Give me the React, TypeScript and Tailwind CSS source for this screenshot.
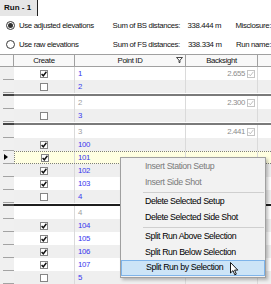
import React from "react";

type RowData = {
  cb: boolean | null;
  id: string;
  blue: boolean;
  bs?: string;
  sel?: boolean;
  sep?: "gray" | "black";
};

const rows: RowData[] = [
  { cb: true, id: "1", blue: true, bs: "2.655" },
  { cb: false, id: "2", blue: true, sep: "gray" },
  { cb: null, id: "2", blue: false, bs: "2.300" },
  { cb: false, id: "3", blue: true, sep: "gray" },
  { cb: null, id: "3", blue: false, bs: "2.441" },
  { cb: true, id: "100", blue: true },
  { cb: true, id: "101", blue: true, sel: true },
  { cb: true, id: "102", blue: true },
  { cb: true, id: "103", blue: true },
  { cb: false, id: "4", blue: true, sep: "black" },
  { cb: null, id: "4", blue: false },
  { cb: true, id: "104", blue: true },
  { cb: true, id: "105", blue: true },
  { cb: true, id: "106", blue: true },
  { cb: true, id: "107", blue: true },
  { cb: false, id: "5", blue: true },
];

const menu = [
  { t: "Insert Station Setup", dis: true },
  { t: "Insert Side Shot", dis: true },
  { sep: true },
  { t: "Delete Selected Setup" },
  { t: "Delete Selected Side Shot" },
  { sep: true },
  { t: "Split Run Above Selection" },
  { t: "Split Run Below Selection" },
  { t: "Split Run by Selection", hot: true },
];

const CheckBox = ({ checked, light }: { checked: boolean; light?: boolean }) => (
  <span
    className={`flex items-center justify-center w-[8px] h-[8px] border ${
      light ? "border-[#c4c4c4] bg-white" : "border-[#858585] bg-white"
    }`}
  >
    {checked && (
      <svg width="6" height="6" viewBox="0 0 6 6">
        <polyline
          points="0.6,3 2.3,4.8 5.4,0.8"
          fill="none"
          stroke={light ? "#b0b0b0" : "#111"}
          strokeWidth={light ? 0.8 : 1.4}
        />
      </svg>
    )}
  </span>
);

const Radio = ({ on }: { on?: boolean }) => (
  <span className="flex items-center justify-center w-[9px] h-[9px] rounded-full border border-[#3a3a3a] bg-white">
    {on && <span className="w-[5px] h-[5px] rounded-full bg-[#333]" />}
  </span>
);

const Separator = ({ kind }: { kind: "gray" | "black" }) => (
  <div className="flex h-[3px]">
    <div className="w-[14px] bg-[#f0f0f0] pl-[3px]">
      <div className="mt-[1px] h-[2px] bg-[#444]" />
    </div>
    <div className={`flex-1 mt-[1px] h-[2px] ${kind === "black" ? "bg-[#1e1e1e]" : "bg-[#7a7a7a]"}`} />
  </div>
);

const GridRow = ({ r, i }: { r: RowData; i: number }) => {
  const bg = r.sel ? "bg-[#ffffe1]" : i % 2 ? "bg-[#efefef]" : "bg-white";
  return (
    <>
      <div className="flex h-[13px]">
        <div className="w-[14px] bg-[#f0f0f0] pl-[3px]">
          <div className="h-full border-b border-[#a3a3a3] flex items-center pl-[1px]">
            {r.sel && (
              <svg width="4" height="6" viewBox="0 0 4 6">
                <polygon points="0,0 4,3 0,6" fill="#000" />
              </svg>
            )}
          </div>
        </div>
        <div
          className={`flex flex-1 ${bg} ${
            r.sel ? "border-y border-l border-dotted border-[#7d7d7d]" : ""
          }`}
        >
          <div className={`${r.sel ? "w-[60px]" : "w-[61px]"} border-r border-[#dadada] flex items-center justify-center`}>
            {r.cb !== null && <CheckBox checked={r.cb} />}
          </div>
          <div
            className={`w-[111px] border-r border-[#dadada] flex items-center pl-[3px] ${
              r.blue ? "text-[#3838ee]" : "text-[#a0a0a0]"
            }`}
          >
            {r.id}
          </div>
          <div className="w-[72px] border-r border-[#dadada] flex items-center justify-end pr-[2px] gap-[2px] text-[#8c8c8c]">
            {r.bs && (
              <>
                <span>{r.bs}</span>
                <CheckBox checked light />
              </>
            )}
          </div>
          <div className="flex-1" />
        </div>
      </div>
      {r.sep && <Separator kind={r.sep} />}
    </>
  );
};

export default function App() {
  return (
    <div className="relative w-[271px] h-[284px] overflow-hidden bg-white text-[7.8px] tracking-[-0.35px] leading-none text-[#111] font-['Liberation_Sans',Arial,sans-serif]">
      {/* tab strip */}
      <div className="flex h-[16px]">
        <div className="w-[38px] bg-[#e6e6e6] border-r border-[#222] flex items-center pl-[4px] font-bold text-[8px] tracking-normal">
          Run - 1
        </div>
      </div>

      {/* options */}
      <div className="flex items-center h-[19px] whitespace-nowrap">
        <div className="w-[117px] flex items-center gap-[4px] pl-[6px]">
          <Radio on />
          <span>Use adjusted elevations</span>
        </div>
        <div className="w-[78px]">Sum of BS distances:</div>
        <div className="w-[50px]">338.444 m</div>
        <div>Misclosure:</div>
      </div>
      <div className="flex items-center h-[19px] whitespace-nowrap">
        <div className="w-[117px] flex items-center gap-[4px] pl-[6px]">
          <Radio />
          <span>Use raw elevations</span>
        </div>
        <div className="w-[78px]">Sum of FS distances:</div>
        <div className="w-[50px]">338.334 m</div>
        <div>Run name:</div>
      </div>

      {/* grid header */}
      <div className="flex h-[13px] border-y border-[#a0a0a0] bg-[#f8f8f8]">
        <div className="w-[14px] border-r border-[#a0a0a0]" />
        <div className="w-[61px] border-r border-[#a0a0a0] flex items-center justify-center">Create</div>
        <div className="relative w-[111px] border-r border-[#a0a0a0] flex items-center justify-center">
          Point ID
          <svg className="absolute right-[2px] top-[2px]" width="7" height="6" viewBox="0 0 7 6">
            <polygon points="0.5,0.5 6.5,0.5 4,3.2 4,5.5 3,5.5 3,3.2" fill="#fff" stroke="#333" strokeWidth="0.9" />
          </svg>
        </div>
        <div className="w-[72px] border-r border-[#a0a0a0] flex items-center justify-center">Backsight</div>
        <div className="flex-1" />
      </div>

      {/* grid rows */}
      <div className="flex flex-col">
        {rows.map((r, i) => (
          <GridRow key={i} r={r} i={i} />
        ))}
      </div>

      {/* context menu */}
      <div className="absolute left-[120px] top-[157px] w-[146px] border border-[#a0a0a0] bg-[#f2f2f2] py-[1px] shadow-[2px_2px_3px_rgba(0,0,0,0.25)] text-[8.8px] tracking-[-0.4px]">
        {menu.map((m, i) =>
          m.sep ? (
            <div key={i} className="h-[4px] flex items-center pl-[22px] pr-[1px]">
              <div className="flex-1 h-px bg-[#cfcfcf]" />
            </div>
          ) : (
            <div
              key={i}
              className={`h-[15.5px] flex items-center pl-[24px] whitespace-nowrap ${
                m.hot ? "border border-[#7eb4ea] bg-[#cce4f7] pl-[23px]" : ""
              } ${m.dis ? "text-[#7a7a7a]" : "text-[#000]"}`}
            >
              {m.t}
            </div>
          )
        )}
      </div>

      {/* mouse pointer */}
      <svg className="absolute left-[230px] top-[262px]" width="9" height="14" viewBox="0 0 9 14">
        <path d="M0.5 0.5 L0.5 11 L3 8.6 L4.8 12.8 L6.3 12.1 L4.6 8.1 L7.8 8.1 Z" fill="#fff" stroke="#000" strokeWidth="0.9" strokeLinejoin="round" />
      </svg>
    </div>
  );
}
